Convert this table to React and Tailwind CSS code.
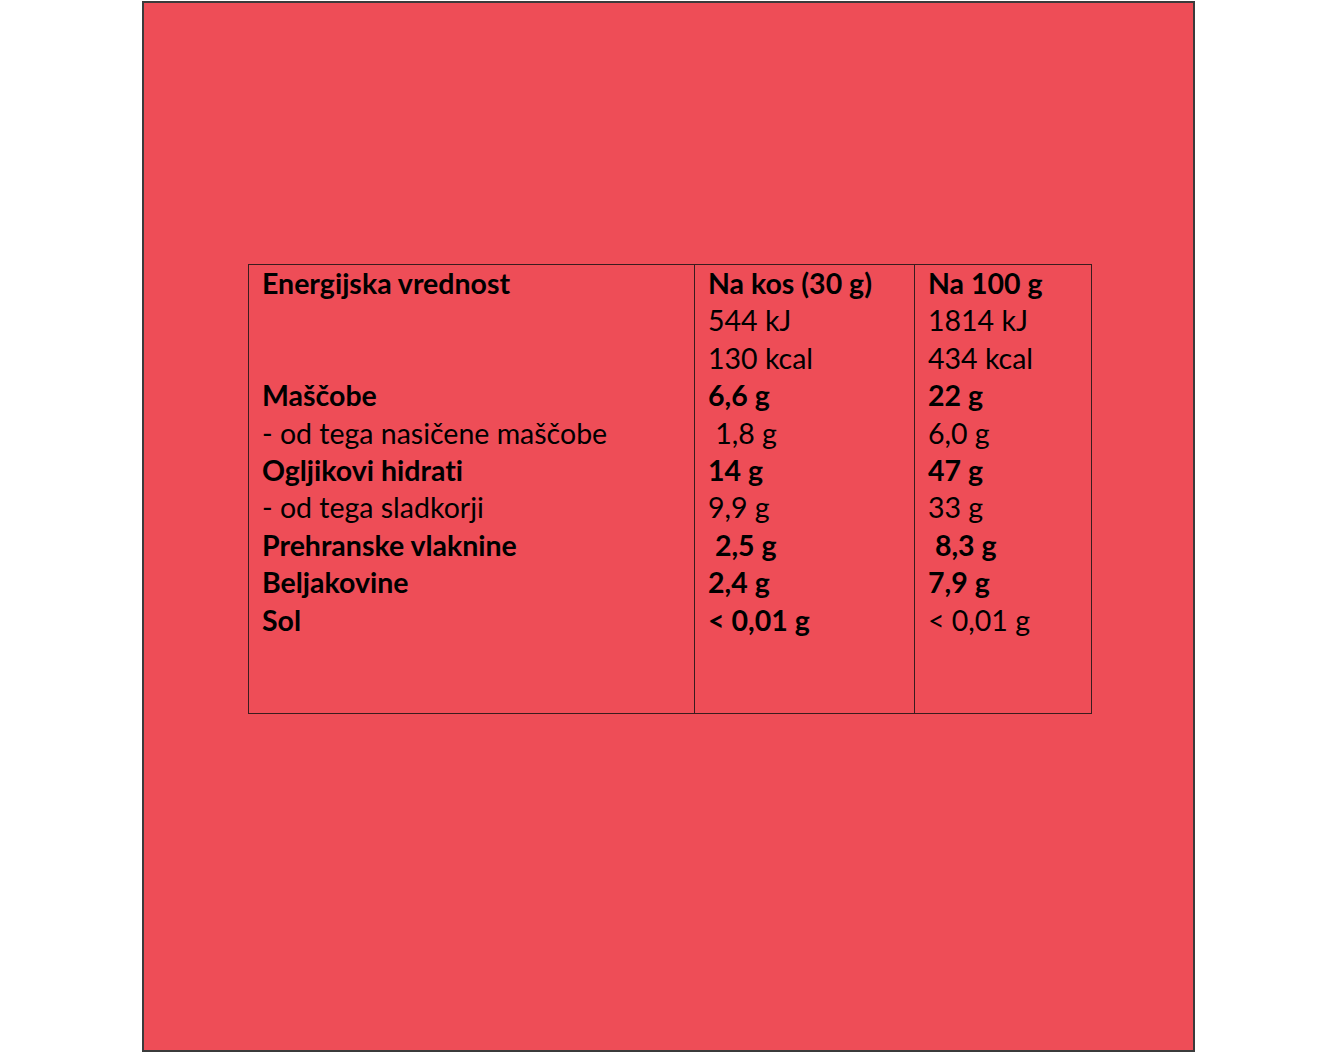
import React from "react";

const col1 = [
  ["Energijska vrednost", true],
  ["", false],
  ["", false],
  ["Maščobe", true],
  ["- od tega nasičene maščobe", false],
  ["Ogljikovi hidrati", true],
  ["- od tega sladkorji", false],
  ["Prehranske vlaknine", true],
  ["Beljakovine", true],
  ["Sol", true],
];
const col2 = [
  ["Na kos (30 g)", true],
  ["544 kJ", false],
  ["130 kcal", false],
  ["6,6 g", true],
  [" 1,8 g", false],
  ["14 g", true],
  ["9,9 g", false],
  [" 2,5 g", true],
  ["2,4 g", true],
  ["< 0,01 g", true],
];
const col3 = [
  ["Na 100 g", true],
  ["1814 kJ", false],
  ["434 kcal", false],
  ["22 g", true],
  ["6,0 g", false],
  ["47 g", true],
  ["33 g", false],
  [" 8,3 g", true],
  ["7,9 g", true],
  ["< 0,01 g", false],
];

function Col({ items, className }) {
  return (
    <div className={"flex flex-col pl-[13px] pt-0 " + className}>
      {items.map(([t, b], i) => (
        <div
          key={i}
          className={"h-[37.4px] leading-[37.4px] whitespace-pre text-black " + (b ? "font-bold" : "font-normal")}
        >
          {t || "\u00a0"}
        </div>
      ))}
    </div>
  );
}

export default function App() {
  return (
    <div className="w-[1338px] h-[1053px] bg-white overflow-hidden">
      <div
        className="ml-[142px] mt-[1px] w-[1053px] h-[1051px] border-2 border-[#3b3b3b] bg-[#ee4d57] pt-[261px] pl-[104px]"
        style={{ fontFamily: "Lato, 'Open Sans', sans-serif" }}
      >
        <div className="w-[844px] h-[450px] border border-[#3a1c1e] flex text-[28.5px] [font-variant-ligatures:none]">
          <Col items={col1} className="w-[446px] border-r border-[#3a1c1e]" />
          <Col items={col2} className="w-[220px] border-r border-[#3a1c1e]" />
          <Col items={col3} className="flex-1" />
        </div>
      </div>
    </div>
  );
}
